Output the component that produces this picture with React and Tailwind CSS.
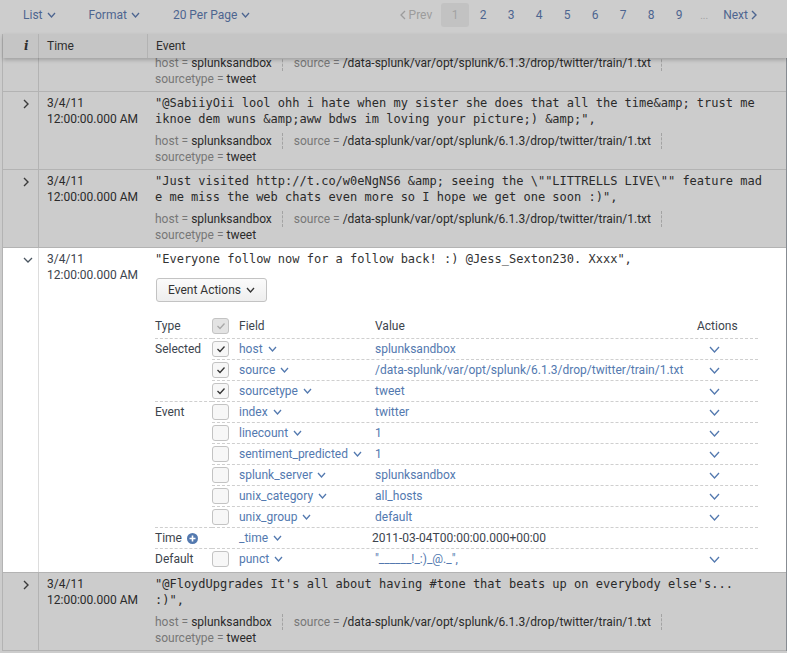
import React from "react";

const ChevDown = ({ w = 9, h = 6, className = "" }) => (
  <svg width={w} height={h} viewBox={`0 0 ${w} ${h}`} className={className}>
    <path d={`M1 1 L${w / 2} ${h - 1} L${w - 1} 1`} fill="none" stroke="currentColor" strokeWidth="1.3" />
  </svg>
);

const ChevRight = ({ className = "" }) => (
  <svg width="6" height="10" viewBox="0 0 6 10" className={className}>
    <path d="M1 1 L5 5 L1 9" fill="none" stroke="currentColor" strokeWidth="1.4" />
  </svg>
);

const ChevLeft = ({ className = "" }) => (
  <svg width="6" height="10" viewBox="0 0 6 10" className={className}>
    <path d="M5 1 L1 5 L5 9" fill="none" stroke="currentColor" strokeWidth="1.3" />
  </svg>
);

const SOURCE = "/data-splunk/var/opt/splunk/6.1.3/drop/twitter/train/1.txt";

function Meta() {
  return (
    <div className="text-[12px] leading-[16px] text-[#2a2a2a]">
      <div className="flex">
        <span className="pr-[10px] border-r border-dashed border-[#a3a3a3]">
          <span className="text-[#777777]">host = </span>splunksandbox
        </span>
        <span className="pl-[11px] pr-[10px] border-r border-dashed border-[#a3a3a3]">
          <span className="text-[#777777]">source = </span>
          {SOURCE}
        </span>
      </div>
      <div>
        <span className="text-[#777777]">sourcetype = </span>tweet
      </div>
    </div>
  );
}

function TimeCell({ dim }) {
  return (
    <div
      className={`w-[109px] shrink-0 pl-[8px] pt-[3px] text-[12px] leading-[16px] ${
        dim ? "text-[#2a2a2a]" : "text-[#3c444d]"
      }`}
    >
      <div>3/4/11</div>
      <div>12:00:00.000 AM</div>
    </div>
  );
}

function EventRow({ lines }) {
  return (
    <div className="flex border-b border-[#b3b3b3] bg-[#cccccc]">
      <div className="w-[36px] shrink-0 border-r border-[#b3b3b3] pl-[20px] pt-[7px] text-[#3a3a3a]">
        <ChevRight />
      </div>
      <TimeCell dim />
      <div className="flex-1 pl-[7px] pt-[3px] pb-[4px]">
        <div className="font-['DejaVu_Sans_Mono',monospace] text-[12px] leading-[16px] text-[#2a2a2a] whitespace-pre">
          {lines.map((l, i) => (
            <div key={i}>{l}</div>
          ))}
        </div>
        <div className="mt-[6px]">
          <Meta />
        </div>
      </div>
    </div>
  );
}

function Box({ state }) {
  if (state === "none") return null;
  const header = state === "header";
  return (
    <div
      className={`w-[17px] h-[16px] rounded-[3px] border border-[#c3c3c3] flex items-center justify-center ${
        header ? "bg-[#e3e3e3]" : "bg-[#f7f7f7]"
      }`}
    >
      {(state === "on" || header) && (
        <svg width="10" height="8" viewBox="0 0 10 8">
          <path
            d="M1.5 4 L4 6.5 L8.5 1.5"
            fill="none"
            stroke={header ? "#a8a8a8" : "#333333"}
            strokeWidth="1.3"
          />
        </svg>
      )}
    </div>
  );
}

const FIELDS = [
  { type: "Selected", start: true, check: "on", field: "host", value: "splunksandbox" },
  { check: "on", field: "source", value: SOURCE },
  { check: "on", field: "sourcetype", value: "tweet" },
  { type: "Event", start: true, check: "off", field: "index", value: "twitter" },
  { check: "off", field: "linecount", value: "1" },
  { check: "off", field: "sentiment_predicted", value: "1" },
  { check: "off", field: "splunk_server", value: "splunksandbox" },
  { check: "off", field: "unix_category", value: "all_hosts" },
  { check: "off", field: "unix_group", value: "default" },
  {
    type: "Time",
    plus: true,
    start: true,
    check: "none",
    field: "_time",
    value: "2011-03-04T00:00:00.000+00:00",
    plain: true,
  },
  { type: "Default", start: true, check: "off", field: "punct", value: '"______!_:)_@._",' },
];

function FieldsTable() {
  return (
    <div className="mt-[12px] w-[603px] text-[12px] text-[#3c444d]">
      <div className="flex h-[24px] items-center">
        <div className="w-[57px] shrink-0">Type</div>
        <div className="w-[27px] shrink-0">
          <Box state="header" />
        </div>
        <div className="w-[136px] shrink-0">Field</div>
        <div className="w-[322px] shrink-0">Value</div>
        <div className="flex-1">Actions</div>
      </div>
      {FIELDS.map((f, i) => (
        <div key={i} className="flex h-[21px]">
          <div
            className={`w-[57px] shrink-0 flex items-center gap-[5px] ${
              f.start ? "border-t border-dashed border-[#cfcfcf]" : ""
            }`}
          >
            {f.type && <span>{f.type}</span>}
            {f.plus && (
              <svg width="11" height="11" viewBox="0 0 11 11">
                <circle cx="5.5" cy="5.5" r="5.5" fill="#5379af" />
                <path d="M5.5 2.5 V8.5 M2.5 5.5 H8.5" stroke="#ffffff" strokeWidth="1.6" />
              </svg>
            )}
          </div>
          <div className="flex-1 flex items-center border-t border-dashed border-[#cfcfcf]">
            <div className="w-[27px] shrink-0">
              <Box state={f.check} />
            </div>
            <div className="w-[136px] shrink-0 flex items-center gap-[5px] text-[#5379af]">
              {f.field}
              <ChevDown w={9} h={6} />
            </div>
            <div
              className={`w-[322px] shrink-0 whitespace-nowrap ${
                f.plain ? "text-[#3c444d] -ml-[3px]" : "text-[#5379af]"
              }`}
            >
              {f.value}
            </div>
            <div className="flex-1 pl-[12px] text-[#5379af]">
              {!f.plain && <ChevDown w={11} h={7} />}
            </div>
          </div>
        </div>
      ))}
    </div>
  );
}

function ExpandedRow() {
  return (
    <div className="flex border-b border-[#b3b3b3] bg-white">
      <div className="w-[36px] shrink-0 border-r border-[#dddddd] pl-[20px] pt-[9px] text-[#4a5560]">
        <ChevDown w={10} h={6} />
      </div>
      <TimeCell />
      <div className="flex-1 pl-[7px] pt-[3px] pb-[3px]">
        <div className="font-['DejaVu_Sans_Mono',monospace] text-[12px] leading-[16px] text-[#333333] whitespace-pre">
          "Everyone follow now for a follow back! :) @Jess_Sexton230. Xxxx",
        </div>
        <button className="mt-[11px] ml-[1px] h-[24px] w-[111px] rounded-[3px] border border-[#c3c3c3] bg-gradient-to-b from-[#fbfbfb] to-[#eeeeee] text-[12px] text-[#333333] flex items-center justify-center gap-[5px]">
          Event Actions
          <ChevDown w={9} h={6} />
        </button>
        <FieldsTable />
      </div>
    </div>
  );
}

export default function App() {
  const pages = [1, 2, 3, 4, 5, 6, 7, 8, 9];
  return (
    <div className="min-h-screen w-[787px] bg-[#cccccc] font-['Roboto',sans-serif] text-[12px]">
      {/* toolbar */}
      <div className="h-[34px] pb-[4px] flex items-center bg-[#cdcdcd]">
        <div className="pl-[23px] flex items-center gap-[33px] text-[#4d6590]">
          <span className="flex items-center gap-[4px]">
            List <ChevDown w={9} h={6} />
          </span>
          <span className="flex items-center gap-[4px]">
            Format <ChevDown w={9} h={6} />
          </span>
          <span className="flex items-center gap-[4px]">
            20 Per Page <ChevDown w={9} h={6} />
          </span>
        </div>
        <div className="ml-auto flex items-center pr-[22px]">
          <span className="flex items-center gap-[3px] pl-[8px] pr-[9px] text-[#9c9c9c]">
            <ChevLeft /> Prev
          </span>
          {pages.map((p) => (
            <span
              key={p}
              className={`w-[28px] h-[24px] flex items-center justify-center rounded-[3px] ${
                p === 1 ? "bg-[#c2c2c2] text-[#a2a2a2]" : "text-[#4d6590]"
              }`}
            >
              {p}
            </span>
          ))}
          <span className="w-[22px] text-center text-[#a0a0a0] text-[10px]">...</span>
          <span className="flex items-center gap-[3px] px-[8px] text-[#4d6590]">
            Next <ChevRight />
          </span>
        </div>
      </div>

      <div className="ml-[2px] border-l border-[#b3b3b3]">
        {/* header */}
        <div className="relative z-10 h-[24px] flex bg-[#c5c5c5] shadow-[0_2px_4px_rgba(0,0,0,0.22)] text-[#2e2e2e]">
          <div className="w-[36px] shrink-0 border-r border-[#b3b3b3] pl-[21px] flex items-center font-['DejaVu_Serif',serif] italic font-bold text-[12px]">
            i
          </div>
          <div className="w-[109px] shrink-0 border-r border-[#b3b3b3] pl-[8px] flex items-center">Time</div>
          <div className="flex-1 pl-[8px] flex items-center">Event</div>
        </div>

        <div className="border-r border-[#878c92]">
          {/* partially scrolled row */}
          <div className="flex h-[34px] overflow-hidden border-b border-[#b3b3b3] bg-[#cccccc]">
            <div className="w-[36px] shrink-0 border-r border-[#b3b3b3]" />
            <div className="w-[109px] shrink-0" />
            <div className="flex-1 pl-[7px] -mt-[3px]">
              <Meta />
            </div>
          </div>

          <EventRow
            lines={[
              '"@SabiiyOii lool ohh i hate when my sister she does that all the time&amp; trust me',
              'iknoe dem wuns &amp;aww bdws im loving your picture;) &amp;",',
            ]}
          />
          <EventRow
            lines={[
              '"Just visited http://t.co/w0eNgNS6 &amp; seeing the \\""LITTRELLS LIVE\\"" feature mad',
              'e me miss the web chats even more so I hope we get one soon :)",',
            ]}
          />
          <ExpandedRow />
          <EventRow
            lines={[
              "\"@FloydUpgrades It's all about having #tone that beats up on everybody else's...",
              ':)",',
            ]}
          />
        </div>
      </div>
    </div>
  );
}
